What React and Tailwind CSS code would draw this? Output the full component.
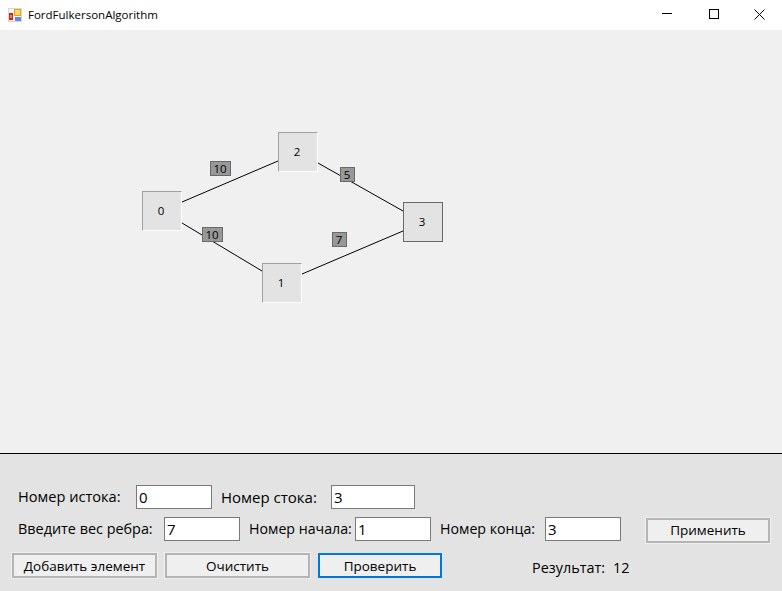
import React from 'react';

const font = { fontFamily: '"Open Sans", "Noto Sans", sans-serif' };

const nodes = [
    { id: 0, cls: 'left-[142px] top-[161px] border-t-[#a0a0a0] border-l-[#a0a0a0] border-r-white border-b-white' },
    { id: 2, cls: 'left-[278px] top-[102px] border-t-[#a0a0a0] border-l-[#a0a0a0] border-r-white border-b-white' },
    { id: 1, cls: 'left-[262px] top-[233px] border-t-[#a0a0a0] border-l-[#a0a0a0] border-r-white border-b-white' },
    { id: 3, cls: 'left-[403px] top-[172px] border-[#696969]' },
];

const weights = [
    { text: '10', cls: 'left-[210px] top-[131px] w-[21px]' },
    { text: '10', cls: 'left-[202px] top-[197px] w-[21px]' },
    { text: '5', cls: 'left-[340px] top-[137px] w-[15px]' },
    { text: '7', cls: 'left-[332px] top-[202px] w-[15px]' },
];

const TitleBar = () => (
    <div className="h-[30px] bg-white flex items-center shrink-0">
        <svg width="16" height="16" viewBox="0 0 16 16" className="ml-[7px]">
            <rect x="1" y="1" width="14" height="14" fill="#d8d8d8" />
            <rect x="2" y="2" width="12" height="12" fill="#f4f4f4" />
            <rect x="7" y="2" width="7" height="7" fill="#e3a21a" />
            <rect x="8" y="3" width="5" height="5" fill="#fcd96a" />
            <rect x="2" y="6" width="4" height="7" fill="#c4281c" />
            <rect x="3" y="8" width="2" height="3" fill="#f08070" />
            <rect x="8" y="10" width="6" height="4" fill="#5a8fdc" />
        </svg>
        <span className="ml-[5px] text-[11.5px] text-black" style={font}>FordFulkersonAlgorithm</span>
        <div className="ml-auto flex -mt-[2px]">
            <div className="w-[46px] h-[30px] flex items-center justify-center">
                <svg width="10" height="10" viewBox="0 0 10 10"><path d="M0 4.5H10" stroke="#000" fill="none" /></svg>
            </div>
            <div className="w-[46px] h-[30px] flex items-center justify-center">
                <svg width="10" height="10" viewBox="0 0 10 10" className="ml-[1px]"><rect x="0.5" y="0.5" width="9" height="9" stroke="#000" fill="none" /></svg>
            </div>
            <div className="w-[46px] h-[30px] flex items-center justify-center">
                <svg width="11" height="11" viewBox="0 0 11 11" className="ml-[1px]"><path d="M0.5 0.5L10.5 10.5M10.5 0.5L0.5 10.5" stroke="#000" fill="none" /></svg>
            </div>
        </div>
    </div>
);

const Graph = () => (
    <div className="relative h-[423px] bg-[#f0f0f0] shrink-0">
        <svg width="782" height="423" className="absolute left-0 top-0">
            <g stroke="#000" strokeWidth="1" fill="none">
                <path d="M182 172L278 131" />
                <path d="M182 193L262 241" />
                <path d="M318 133L403 181" />
                <path d="M302 244L403 201" />
            </g>
        </svg>
        {nodes.map((n) => (
            <div
                key={n.id}
                className={`absolute w-[40px] h-[40px] border bg-[#e3e3e3] flex items-center justify-center text-[11.5px] text-black ${n.cls}`}
                style={font}
            >
                <span className="-ml-[2px]">{n.id}</span>
            </div>
        ))}
        {weights.map((w, i) => (
            <div
                key={i}
                className={`absolute h-[15px] border border-[#696969] bg-[#989898] flex items-center justify-center text-[11.5px] leading-none text-black ${w.cls}`}
                style={font}
            >
                <span className="-ml-[1px]">{w.text}</span>
            </div>
        ))}
    </div>
);

const Field = ({ value, width }) => (
    <input
        readOnly
        value={value}
        className={`${width} h-[24px] shrink-0 bg-white border border-[#7a7a7a] px-[2px] text-[15px] text-black outline-none`}
        style={font}
    />
);

const Label = ({ children, className }) => (
    <span className={`shrink-0 self-center whitespace-nowrap text-black ${className}`} style={font}>{children}</span>
);

const Btn = ({ children, width, focused }) => (
    <button
        className={`${width} h-[25px] shrink-0 bg-[#efefef] text-[13.5px] text-black flex items-center justify-center ${focused ? 'border-2 border-[#0078d7]' : 'border-2 border-[#b4b4b4] outline outline-1 outline-[#f0f0f0]'}`}
        style={font}
    >
        {children}
    </button>
);

const App = () => {
    return (
        <div className="w-[782px] h-[591px] flex flex-col overflow-hidden">
            <TitleBar />
            <Graph />
            <div className="flex-1 bg-[#e3e3e3] border-t border-black flex flex-col pt-[31px]">
                <div className="flex items-center pl-[18px]">
                    <Label className="w-[118px] text-[14.6px]">Номер истока:</Label>
                    <Field value="0" width="w-[76px]" />
                    <Label className="ml-[9px] w-[110px] text-[15px]">Номер стока:</Label>
                    <Field value="3" width="w-[84px]" />
                </div>
                <div className="flex items-start h-[24px] pl-[18px] mt-[8px]">
                    <Label className="w-[146px] text-[14.4px]">Введите вес ребра:</Label>
                    <Field value="7" width="w-[76px]" />
                    <Label className="ml-[9px] w-[106px] text-[14.2px]">Номер начала:</Label>
                    <Field value="1" width="w-[76px]" />
                    <Label className="ml-[9px] w-[105px] text-[14.2px]">Номер конца:</Label>
                    <Field value="3" width="w-[76px]" />
                    <div className="ml-[25px] mt-[1px]">
                        <Btn width="w-[124px]">Применить</Btn>
                    </div>
                </div>
                <div className="flex items-center pl-[12px] mt-[12px]">
                    <Btn width="w-[145px]">Добавить элемент</Btn>
                    <div className="ml-[8px]"><Btn width="w-[145px]">Очистить</Btn></div>
                    <div className="ml-[8px]"><Btn width="w-[124px]" focused>Проверить</Btn></div>
                    <Label className="ml-[90px] w-[81px] pt-[4px] text-[14.4px]">Результат:</Label>
                    <Label className="pt-[4px] text-[14.4px]">12</Label>
                </div>
            </div>
        </div>
    );
};

export default App;
